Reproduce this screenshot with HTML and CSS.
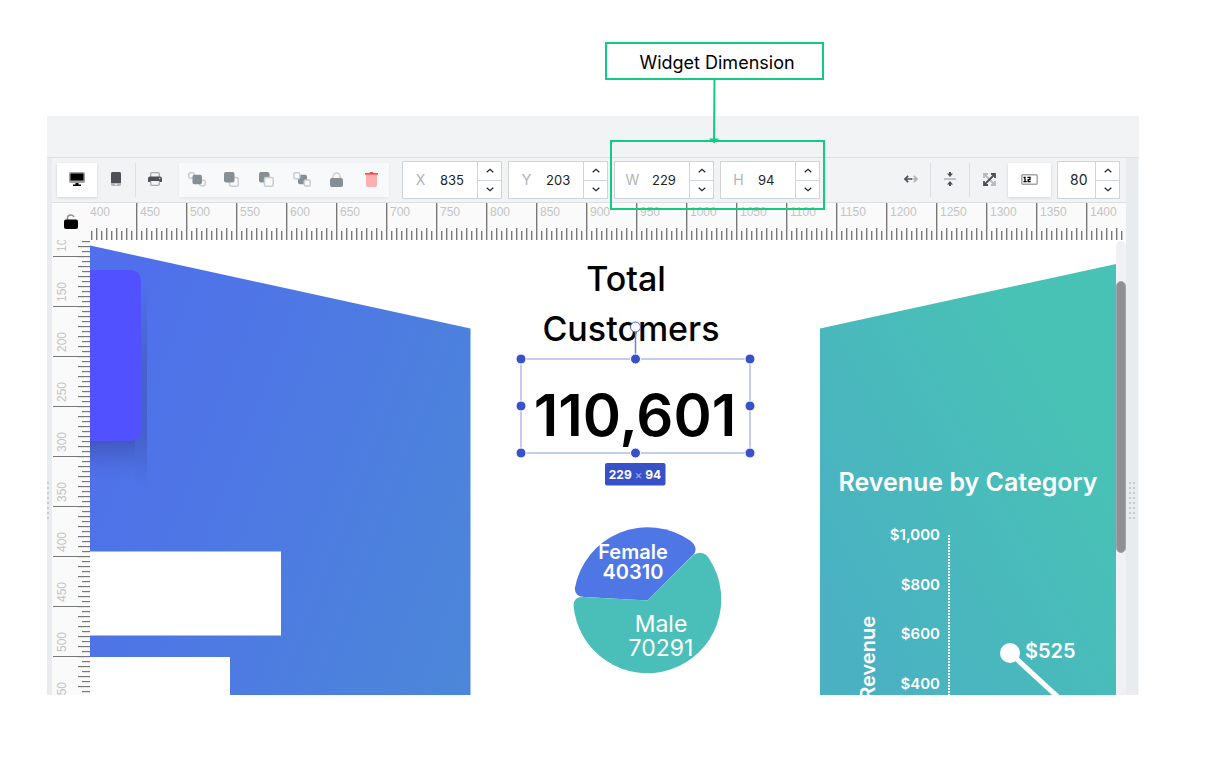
FILE: index.html
```html
<!DOCTYPE html>
<html lang="en">
<head>
<meta charset="utf-8">
<title>Widget Dimension</title>
<link rel="stylesheet" href="styles.css">
</head>
<body>
<main class="page">
  <div class="callout">Widget Dimension
    <svg class="callout-arrow" width="14" height="66" viewBox="0 0 14 66" aria-hidden="true"><path d="M7.500 0 7 64" stroke="#10cb81" stroke-width="2"/><path d="M2 60.500h10L7 65.500z" fill="#10cb81"/></svg>
  </div>
  <section class="app">
    <header class="app-header"></header>
    <div class="workspace">
      <div class="gutter gutter-left"><span class="grip"></span></div>
      <div class="editor">
        <div class="toolbar">
          <button class="tool tool-active" aria-label="Desktop"><svg width="16" height="15" viewBox="0 0 16 15"><rect width="16" height="11" rx="1.500" fill="#a0a2a5"/><rect x="1.500" y="1.500" width="13" height="7" rx=".5" fill="#000"/><path d="M6.500 11h3v1.500H12V14H4v-1.500h2.500z" fill="#000"/></svg></button>
          <button class="tool" aria-label="Mobile"><svg width="10" height="14" viewBox="0 0 10 14"><rect width="10" height="14" rx="1.500" fill="#b4b6b9"/><path d="M0 11V1.500Q0 0 1.500 0h7Q10 0 10 1.500V11z" fill="#4d5055"/><circle cx="5" cy="12.400" r=".8" fill="#fff"/></svg></button>
          <span class="divider"></span>
          <button class="tool" aria-label="Print"><svg width="14" height="14" viewBox="0 0 14 14"><path d="M2.700 5V2Q2.700.7 4 .7h6Q11.300.7 11.300 2v3M2.700 9v3q0 1.300 1.300 1.300h6q1.300 0 1.300-1.300V9" fill="none" stroke="#a9abae" stroke-width="1.300"/><path d="M2 4.500h10q2 0 2 2V10h-2.200V9H2.200v1H0V6.500q0-2 2-2z" fill="#4d5055"/><circle cx="11.800" cy="6.600" r=".7" fill="#fff"/></svg></button>
          <div class="tool-group">
            <button class="tool" aria-label="Bring to front"><svg width="18" height="15" viewBox="0 0 18 15"><g fill="none" stroke="#c9ccd0" stroke-width="1.500"><rect x=".8" y=".8" width="5.500" height="5.500" rx="1.500"/><rect x="11.700" y="8.200" width="5.500" height="5.500" rx="1.500"/></g><rect x="4.500" y="2.800" width="9.500" height="9.500" rx="2" fill="#868e96"/></svg></button>
            <button class="tool" aria-label="Bring forward"><svg width="15" height="15" viewBox="0 0 15 15"><rect x="5.500" y="5.500" width="8.700" height="8.700" rx="1.500" fill="none" stroke="#c9ccd0" stroke-width="1.500"/><rect width="10.500" height="10.500" rx="2" fill="#868e96"/></svg></button>
            <button class="tool" aria-label="Send backward"><svg width="15" height="15" viewBox="0 0 15 15"><rect width="10.500" height="10.500" rx="2" fill="#868e96"/><rect x="5.500" y="5.500" width="8.700" height="8.700" rx="1.500" fill="#f8f9fb" stroke="#c9ccd0" stroke-width="1.500"/></svg></button>
            <button class="tool" aria-label="Send to back"><svg width="18" height="15" viewBox="0 0 18 15"><rect x="5" y="2.800" width="9" height="9.500" rx="2" fill="#868e96"/><g fill="#f8f9fb" stroke="#c9ccd0" stroke-width="1.500"><rect x=".8" y=".8" width="6" height="6" rx="1.500"/><rect x="11.200" y="8" width="6" height="6" rx="1.500"/></g></svg></button>
            <button class="tool" aria-label="Lock"><svg width="13" height="15" viewBox="0 0 13 15"><path d="M3 7V4.500a3.500 3.500 0 0 1 7 0V7" fill="none" stroke="#cdd0d3" stroke-width="1.500"/><rect y="6" width="13" height="9" rx="2" fill="#868e96"/></svg></button>
            <button class="tool" aria-label="Delete"><svg width="13" height="15" viewBox="0 0 13 15"><path d="M1 2.500h11V13q0 2-2 2H3q-2 0-2-2z" fill="#fab0b0"/><path d="M0 1h4.500L5 0h3l.5 1H13v1.800H0z" fill="#fa5252"/></svg></button>
          </div>
          <div class="fields">
            <div class="field"><label for="pos-x">X</label><input id="pos-x" value="835"><span class="spin"><button aria-label="Increase X"><svg viewBox="0 0 8 5"><path d="m.7 4.200 3.300-3 3.300 3"/></svg></button><button aria-label="Decrease X"><svg viewBox="0 0 8 5"><path d="m.7.8 3.300 3 3.300-3"/></svg></button></span></div>
            <div class="field"><label for="pos-y">Y</label><input id="pos-y" value="203"><span class="spin"><button aria-label="Increase Y"><svg viewBox="0 0 8 5"><path d="m.7 4.200 3.300-3 3.300 3"/></svg></button><button aria-label="Decrease Y"><svg viewBox="0 0 8 5"><path d="m.7.8 3.300 3 3.300-3"/></svg></button></span></div>
            <div class="fields highlighted">
              <div class="field"><label for="dim-w">W</label><input id="dim-w" value="229"><span class="spin"><button aria-label="Increase width"><svg viewBox="0 0 8 5"><path d="m.7 4.200 3.300-3 3.300 3"/></svg></button><button aria-label="Decrease width"><svg viewBox="0 0 8 5"><path d="m.7.8 3.300 3 3.300-3"/></svg></button></span></div>
              <div class="field"><label for="dim-h">H</label><input id="dim-h" value="94"><span class="spin"><button aria-label="Increase height"><svg viewBox="0 0 8 5"><path d="m.7 4.200 3.300-3 3.300 3"/></svg></button><button aria-label="Decrease height"><svg viewBox="0 0 8 5"><path d="m.7.8 3.300 3 3.300-3"/></svg></button></span></div>
            </div>
          </div>
          <div class="view-tools">
            <button class="tool" aria-label="Fit width"><svg width="14" height="8" viewBox="0 0 14 8" fill="none" stroke-width="1.700"><path d="M7 4h6M9.800.8 13 4 9.800 7.200" stroke="#b0b3b6"/><path d="M8 4H1M4.200.8 1 4l3.200 3.200" stroke="#4d5055"/></svg></button>
            <span class="divider"></span>
            <button class="tool" aria-label="Fit height"><svg width="12" height="14" viewBox="0 0 12 14"><path d="M0 7h12" stroke="#b0b3b6" stroke-width="1.500"/><path d="M5 0h2v1.500h2L6 5 3 1.500h2zM5 14h2v-1.500h2L6 9l-3 3.500h2z" fill="#4d5055"/></svg></button>
            <span class="divider"></span>
            <button class="tool" aria-label="Fit screen"><svg width="13" height="13" viewBox="0 0 13 13" fill="none" stroke-width="1.800"><path d="M1 5V1h4M1 1l11 11M8 12h4V8" stroke="#b7babd"/><path d="M8 1h4v4M12 1 1 12M1 8v4h4" stroke="#4d5055"/></svg></button>
            <button class="tool tool-active tool-wide" aria-label="Rulers"><svg width="17" height="11" viewBox="0 0 17 11"><rect x=".8" y=".8" width="15.400" height="9.400" rx="1" fill="#fff" stroke="#a4a6a9" stroke-width="1.500"/><path d="M2.500 3.500H4V8M2.500 7.600h3.200M6.500 3.400h2.500v2.200H7.200v2h2.400" fill="none" stroke="#000" stroke-width="1.300"/></svg></button>
            <div class="field field-zoom"><input id="zoom" aria-label="Zoom" value="80"><span class="spin"><button aria-label="Zoom in"><svg viewBox="0 0 8 5"><path d="m.7 4.200 3.300-3 3.300 3"/></svg></button><button aria-label="Zoom out"><svg viewBox="0 0 8 5"><path d="m.7.8 3.300 3 3.300-3"/></svg></button></span></div>
          </div>
        </div>
        <div class="stage">
          <button class="corner" aria-label="Unlock guides"><svg width="14" height="15" viewBox="0 0 14 15"><path d="M3.500 7V4.200q0-3.200 3.300-3.200Q9.300 1 10 3" fill="none" stroke="#8c8c8c" stroke-width="1.500"/><rect y="5.500" width="14" height="9.500" rx="2" fill="#000"/></svg></button>
          <div class="ruler-x"><span>400</span><span>450</span><span>500</span><span>550</span><span>600</span><span>650</span><span>700</span><span>750</span><span>800</span><span>850</span><span>900</span><span>950</span><span>1000</span><span>1050</span><span>1100</span><span>1150</span><span>1200</span><span>1250</span><span>1300</span><span>1350</span><span>1400</span></div>
          <div class="ruler-y"><div class="ruler-y-labels"><span>10</span><span>150</span><span>200</span><span>250</span><span>300</span><span>350</span><span>400</span><span>450</span><span>500</span><span>550</span></div></div>
          <div class="canvas">
            <svg class="artboard" width="1026" height="455" viewBox="90 240 1026 455">
              <defs>
                <linearGradient id="blue" gradientUnits="userSpaceOnUse" x1="90" y1="440" x2="560" y2="620"><stop offset="0" stop-color="#4f70ea"/><stop offset="1" stop-color="#4b8ad6"/></linearGradient>
                <linearGradient id="teal" gradientUnits="userSpaceOnUse" x1="800" y1="560" x2="1080" y2="400"><stop offset="0" stop-color="#4ab1c3"/><stop offset="1" stop-color="#48c2b5"/></linearGradient>
                <linearGradient id="shade" x1="0" y1="0" x2="0" y2="1"><stop offset="0" stop-color="#37479a" stop-opacity=".9"/><stop offset="1" stop-color="#4f70ea" stop-opacity="0"/></linearGradient>
                <linearGradient id="side" x1="0" y1="0" x2="0" y2="1"><stop offset="0" stop-color="#3f57b8" stop-opacity="0"/><stop offset=".4" stop-color="#3f57b8" stop-opacity=".6"/><stop offset=".75" stop-color="#3f57b8" stop-opacity=".6"/><stop offset="1" stop-color="#3f57b8" stop-opacity="0"/></linearGradient>
              </defs>
              <path d="M90 245.500 470.500 328.500V695H90z" fill="url(#blue)"/>
              <rect x="135" y="285" width="12" height="200" fill="url(#side)"/>
              <rect x="90" y="430" width="45" height="55" fill="url(#shade)"/>
              <path d="M90 270h39q12 0 12 12v147q0 12-12 12H90z" fill="#5251ff"/>
              <path d="M90 551.500h191v84H90zM90 657h140v38H90z" fill="#fff"/>
              <path d="M820 328.500 1116 264V695H820z" fill="url(#teal)"/>

              <g class="copy" text-anchor="middle">
                <text class="heading" x="626" y="291">Total</text>
                <text class="heading" x="631" y="341">Customers</text>
                <text class="figure" x="635" y="436">110,601</text>
              </g>

              <g stroke="#b0bbe9" fill="none" stroke-width="1.500"><rect x="521" y="359" width="229" height="94"/><path d="M635.500 332v24" stroke="#6f80d6"/></g>
              <g fill="#3850c8" stroke="#fff"><circle cx="521" cy="359" r="5"/><circle cx="635.500" cy="359" r="5"/><circle cx="750" cy="359" r="5"/><circle cx="521" cy="406" r="5"/><circle cx="750" cy="406" r="5"/><circle cx="521" cy="453" r="5"/><circle cx="635.500" cy="453" r="5"/><circle cx="750" cy="453" r="5"/></g>
              <circle cx="635.500" cy="327" r="5" fill="#fff" stroke="#4a60d0"/>
              <rect x="605" y="463" width="60.500" height="22.500" rx="2" fill="#3850c8"/>
              <text class="badge" x="635" y="479" text-anchor="middle">229 <tspan class="times">×</tspan> 94</text>

              <path d="M647.500 600.500 584 597Q574 596 575 587.500A74 74 0 0 1 690 540.500Q698.500 547 694 554z" fill="#4e76e4"/>
              <path d="M647.500 600.500 694 554.500Q704 549 710 560A74 74 0 1 1 573.500 605Q574 596 584 597z" fill="#4abfb9"/>
              <g class="light" text-anchor="middle">
                <text class="slice-bold" x="633" y="559">Female</text>
                <text class="slice-bold" x="633" y="579">40310</text>
                <text class="slice" x="661" y="632">Male</text>
                <text class="slice" x="661" y="656">70291</text>
              </g>

              <text class="chart-title light" x="968" y="491" text-anchor="middle">Revenue by Category</text>
              <g class="axis light" text-anchor="end">
                <text x="940" y="540">$1,000</text>
                <text x="940" y="590">$800</text>
                <text x="940" y="639">$600</text>
                <text x="940" y="689">$400</text>
              </g>
              <text class="axis-title light" text-anchor="end" transform="translate(875 616) rotate(-90)">Revenue</text>
              <path d="M949 535v160" stroke="#fff" stroke-width="2" stroke-dasharray="2 1"/>
              <path d="M1010 653 1060 699" stroke="#fff" stroke-width="5"/>
              <circle cx="1010" cy="653" r="10" fill="#fff"/>
              <text class="point-label light" x="1025" y="658">$525</text>
            </svg>
            <div class="scrollbar"><div class="thumb"></div></div>
          </div>
        </div>
      </div>
      <div class="gutter gutter-right"><span class="grip"></span></div>
    </div>
  </section>
</main>
</body>
</html>
```
FILE: styles.css
```css
* { box-sizing: border-box; }

body {
  margin: 0;
  background: #fff;
  color: #000;
  font-family: Inter, "Liberation Sans", sans-serif;
}

button {
  margin: 0;
  padding: 0;
  border: 0;
  background: none;
  cursor: pointer;
}

.page { padding: 42px 72px 70px 47px; }

.callout {
  position: relative;
  width: 219px;
  margin: 0 0 36px 558px;
  border: 2px solid #10cb81;
  padding: 5px 0 1px 5px;
  font-size: 18px;
  line-height: 28px;
  text-align: center;
}
.callout-arrow {
  position: absolute;
  z-index: 2;
  top: 100%;
  left: 50%;
  margin-left: -8px;
}

.app-header {
  height: 42px;
  border-bottom: 1px solid #dcdfe3;
  background: #f1f3f5;
}

.workspace { display: flex; }

.gutter {
  flex: none;
  background: #e9ecef;
}
.gutter-left { width: 5px; }
.gutter-right {
  width: 13px;
  padding-left: 3px;
  border-right: 1px solid #f6f7f8;
}
.grip {
  display: block;
  height: 38px;
  margin-top: 324px;
  background: conic-gradient(at 2px 2px, transparent 75%, #c8cbce 0) 0 0 / 4px 5px;
}
.gutter-left .grip { width: 2px; }
.gutter-right .grip { width: 6px; }

.editor {
  flex: 1;
  min-width: 0;
}

.toolbar {
  display: flex;
  align-items: center;
  height: 45px;
  padding: 0 6px 0 5px;
  border-bottom: 1px solid #dcdfe3;
  background: #f1f3f5;
}

.tool {
  display: grid;
  place-items: center;
  flex: none;
  width: 38px;
  height: 34px;
  padding-bottom: 2px;
}
.tool-active {
  width: 40px;
  background: #fff;
  box-shadow: 0 1px 3px #0002;
}
.tool-wide { width: 43px; }

.divider {
  width: 1px;
  height: 34px;
  background: #dcdfe3;
}

.tool-group {
  display: flex;
  margin-left: 5px;
  background: #f8f9fb;
  box-shadow: 0 1px 3px #0001;
}
.tool-group .tool { width: 35px; }

.fields {
  display: flex;
  gap: 6px;
}
.tool-group + .fields { margin-left: 13px; }

.highlighted { position: relative; }
.highlighted::after {
  content: "";
  position: absolute;
  z-index: 1;
  inset: -21px -5px -11px -4px;
  border: 2px solid #10cb81;
  pointer-events: none;
}

.field {
  display: flex;
  width: 100px;
  height: 38px;
  border: 1px solid #ced4da;
  background: #fff;
  font-size: 14px;
}
.field label {
  width: 37px;
  padding-right: 2px;
  color: #adb5bd;
  line-height: 35px;
  text-align: center;
}
.field input {
  flex: 1;
  min-width: 0;
  border: 0;
  padding: 0 0 1px;
  background: none;
  color: #212529;
  font: 13px Inter, sans-serif;
}
.field-zoom {
  width: 63px;
  margin-left: 6px;
}
.field-zoom input { padding-left: 12px; font-size: 14px; }

.spin {
  display: flex;
  flex-direction: column;
  width: 24px;
  border-left: 1px solid #ced4da;
}
.spin button {
  flex: 1;
  display: grid;
  place-items: center;
}
.spin button + button { border-top: 1px solid #ced4da; }
.spin svg {
  width: 8px;
  height: 5px;
  fill: none;
  stroke: #212529;
  stroke-width: 1.2;
}

.view-tools {
  display: flex;
  align-items: center;
  margin-left: auto;
}

.stage {
  display: grid;
  grid-template: 37px auto / 38px minmax(0, 1fr);
  background: #fafafa;
}

.corner {
  display: grid;
  place-items: center;
}

.ruler-x,
.ruler-y-labels {
  color: #c4c4c4;
  font: 12px/14px "Liberation Sans", Arial, sans-serif;
}
.ruler-x {
  display: flex;
  overflow: hidden;
  padding-top: 2px;
  background-image:
    linear-gradient(90deg, #777 1px, #c8c8c8 1px 2px, transparent 2px),
    linear-gradient(90deg, #777 1px, #c8c8c8 1px 2px, transparent 2px),
    linear-gradient(90deg, #777 1px, #c8c8c8 1px 2px, transparent 2px);
  background-position: 46px 0, 6px 100%, 1px 100%;
  background-size: 50px 100%, 10px 12px, 10px 9px;
  background-repeat: repeat-x;
}
.ruler-x span {
  flex: none;
  width: 50px;
}

.ruler-y {
  height: 455px;
  overflow: hidden;
  background-image:
    linear-gradient(#777 1px, transparent 1px),
    linear-gradient(#777 1px, #e4e4e4 1px 2px, transparent 2px),
    linear-gradient(#777 1px, #e4e4e4 1px 2px, transparent 2px);
  background-position: 1px 16px, 100% 6px, 100% 1px;
  background-size: 37px 50px, 12px 10px, 8px 10px;
  background-repeat: repeat-y;
}
.ruler-y-labels {
  margin: -38px 0 0 3px;
}
.ruler-y-labels span {
  display: block;
  height: 50px;
  writing-mode: vertical-rl;
  transform: rotate(180deg);
}

.canvas {
  display: flex;
  overflow: hidden;
  background: #fff;
}
.artboard {
  flex: 1 0 auto;
  display: block;
}
.scrollbar {
  flex: none;
  width: 10px;
  margin-top: 1px;
  padding-top: 40px;
  border-radius: 5px 5px 0 0;
  background: #f1f1f5;
}
.thumb {
  height: 272px;
  border: 1px solid #a6a6aa;
  border-radius: 5px;
  background: #909094;
}

.heading { font-size: 34px; font-weight: 500; }
.figure { font-size: 58px; font-weight: 600; }
.light { fill: #fff; }
.badge { fill: #fff; font-size: 12px; font-weight: 700; }
.times { fill: #a5b0e6; font-weight: 400; }
.slice-bold { font-size: 20px; font-weight: 600; }
.slice { font-size: 23px; }
.chart-title { font-size: 25px; font-weight: 600; }
.axis { font-size: 15px; font-weight: 600; }
.axis-title { font-size: 20px; font-weight: 600; }
.point-label { font-size: 20px; font-weight: 600; }
```
